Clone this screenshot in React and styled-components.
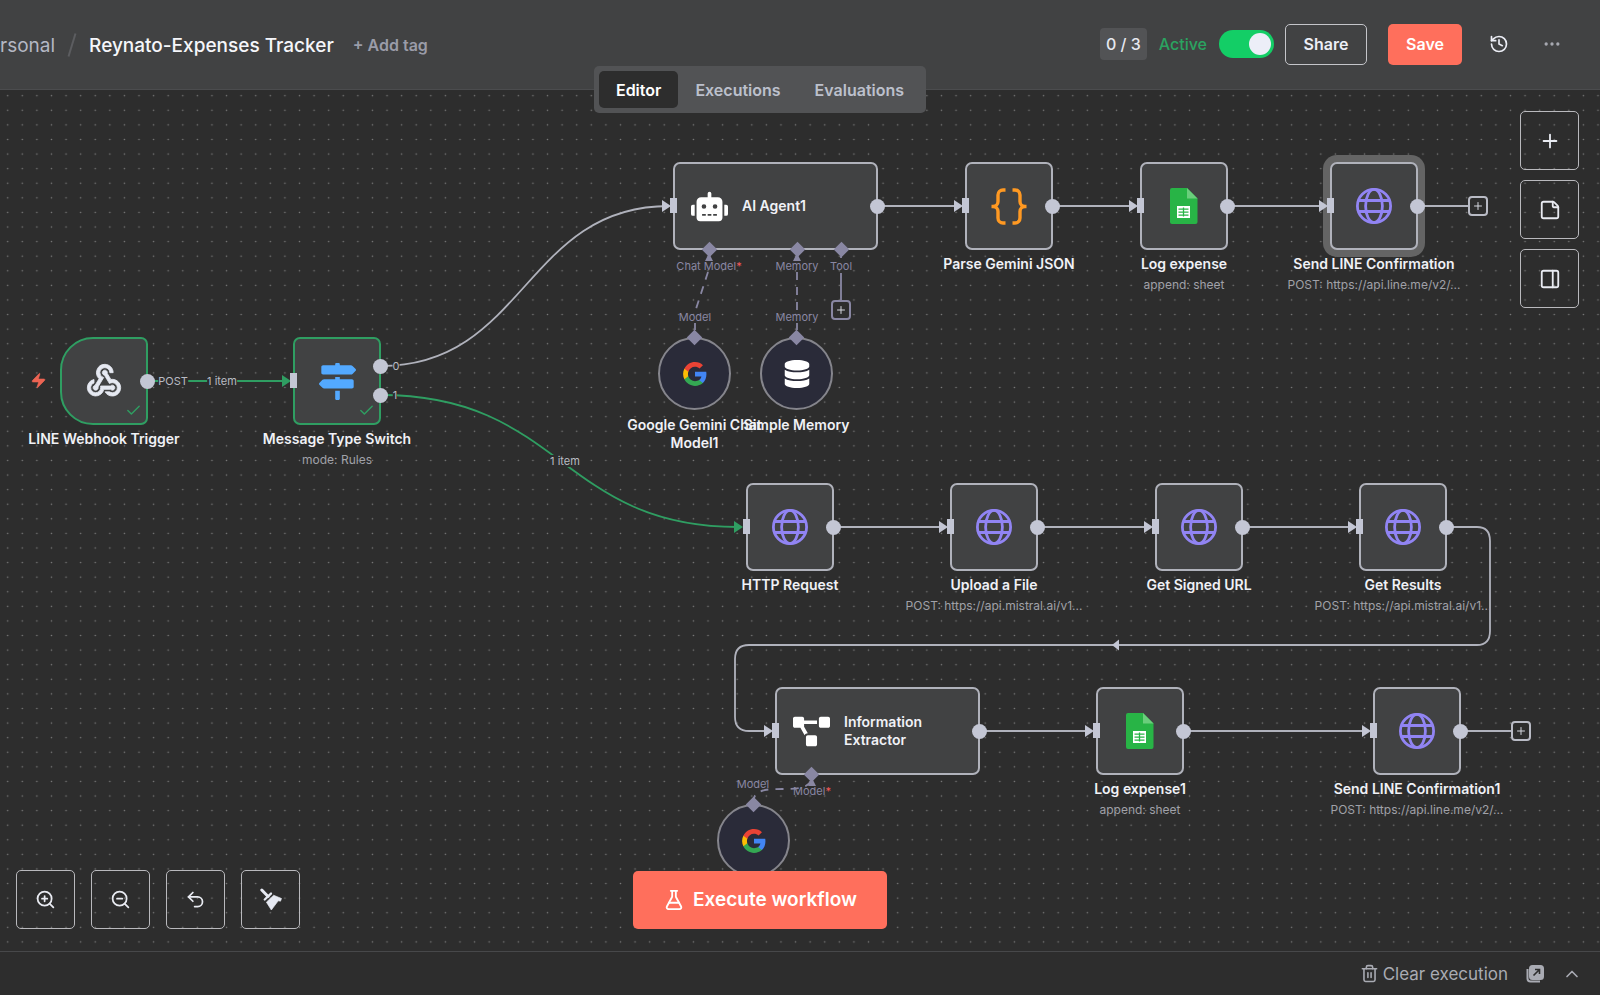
import React, { useState } from 'react'
import styled, { createGlobalStyle } from 'styled-components'
import {
    Check, ChevronUp, Ellipsis, FlaskConical, History, PanelRight, Plus,
    StickyNote, Trash2, Undo2, Zap, ZoomIn, ZoomOut
} from 'lucide-react'
import { FaDatabase, FaMapSigns, FaProjectDiagram, FaRobot } from 'react-icons/fa'
import { MdWebhook } from 'react-icons/md'

const colors = {
    canvas: '#2d2d2d',
    surface: '#414243',
    raised: '#525355',
    line: '#b0b2bc',
    handle: '#c3c6d4',
    sub: '#8987a3',
    green: '#2f9e62',
    primary: '#ff6f5c',
}

const Globe = () => (
    <svg width="36" height="36" viewBox="0 0 36 36" fill="none" stroke="#9184f3" strokeWidth="2.800">
        <circle cx="18" cy="18" r="16.600" />
        <ellipse cx="18" cy="18" rx="8.400" ry="16.600" />
        <path d="M2.200 12.500h31.600M2.200 23.500h31.600" />
    </svg>
)

const Sheet = () => (
    <svg width="28" height="36" viewBox="0 0 28 36">
        <path d="M2 0h15l10.500 10.500V34a2 2 0 0 1-2 2H2a2 2 0 0 1-2-2V2a2 2 0 0 1 2-2z" fill="#28b446" />
        <path d="M17 0l10.500 10.500H17z" fill="#6ace7c" />
        <path d="M7 18h13v12H7z" fill="#fff" />
        <path d="M8.500 21.200h10M8.500 24.200h10M8.500 27.200h10M13.500 19.500v9" stroke="#28b446" strokeWidth="1.300" />
    </svg>
)

const CodeBraces = () => (
    <svg width="36" height="37" viewBox="0 0 36 37" fill="none" stroke="#ff9922" strokeWidth="3.400">
        <path d="M14.500 2H12a5 5 0 0 0-5 5v6.500a5 5 0 0 1-5 5h-1.500 1.500a5 5 0 0 1 5 5V30a5 5 0 0 0 5 5h2.500" />
        <path d="M21.500 2H24a5 5 0 0 1 5 5v6.500a5 5 0 0 0 5 5h1.500-1.500a5 5 0 0 0-5 5V30a5 5 0 0 1-5 5h-2.500" />
    </svg>
)

const Google = () => (
    <svg width="26" height="26" viewBox="0 0 24 24">
        <path fill="#4285f4" d="M22.560 12.250c0-.78-.07-1.530-.2-2.250H12v4.260h5.920c-.26 1.370-1.040 2.530-2.210 3.310v2.770h3.570c2.080-1.920 3.280-4.740 3.280-8.090z" />
        <path fill="#34a853" d="M12 23c2.970 0 5.460-.98 7.280-2.660l-3.570-2.770c-.98.66-2.230 1.060-3.710 1.060-2.860 0-5.290-1.930-6.160-4.530H2.180v2.840C3.990 20.530 7.700 23 12 23z" />
        <path fill="#fbbc05" d="M5.840 14.090c-.22-.66-.35-1.360-.35-2.090s.13-1.430.35-2.090V7.070H2.180C1.430 8.550 1 10.220 1 12s.43 3.450 1.180 4.930l3.660-2.840z" />
        <path fill="#ea4335" d="M12 5.380c1.620 0 3.060.56 4.210 1.640l3.150-3.150C17.450 2.090 14.970 1 12 1 7.700 1 3.990 3.470 2.180 7.070l3.660 2.840c.87-2.600 3.300-4.530 6.160-4.530z" />
    </svg>
)

const Broom = () => (
    <svg width="22" height="23" viewBox="0 0 66 70" fill="#e6e9f2" stroke="#e6e9f2">
        <path d="M5 6l19 20" strokeWidth="9" strokeLinecap="round" />
        <path d="M14 35L33 17" strokeWidth="7" strokeLinecap="round" />
        <path d="M19 43L41 22L65 32L62 40L55 39L34 67Z" strokeWidth="2" strokeLinejoin="round" />
    </svg>
)

const PopOut = () => (
    <svg width="18" height="18" viewBox="0 0 18 18" fill="none" stroke="#a9abb3" strokeWidth="2">
        <path d="M1.500 4v9.500a3 3 0 0 0 3 3H14" />
        <rect x="4" y="1" width="13" height="13" rx="2.500" fill="#a9abb3" />
        <path d="M7.500 10.500L13 5M9 4.500h4.500V9" stroke="#2d2d2d" strokeWidth="1.600" />
    </svg>
)

// the material icon carries an invisible bounding path, keep it unstroked
const WebhookIcon = styled(MdWebhook)`
    color: #e6e9f2;
    stroke: #e6e9f2;

    path {
        stroke-width: 0.5px;
    }
    path[fill='none'] {
        stroke: none;
    }
`

const icons = {
    globe: <Globe />,
    sheet: <Sheet />,
    braces: <CodeBraces />,
    webhook: <WebhookIcon size={40} />,
    signs: <FaMapSigns size={37} color="#53a9ff" />,
    google: <Google />,
    database: <FaDatabase size={28} color="#fff" />,
    robot: <FaRobot size={37} color="#fff" />,
    diagram: <FaProjectDiagram size={37} color="#fff" />,
}

const nodes = [
    { x: 60, y: 247, icon: 'webhook', title: 'LINE Webhook Trigger', trigger: true, done: true, outs: [44] },
    { x: 293, y: 247, icon: 'signs', title: 'Message Type Switch', sub: 'mode: Rules', done: true, input: true, outs: [29, 58] },
    { x: 673, y: 72, icon: 'robot', name: 'AI Agent1', wide: true, input: true, outs: [44], ports: [36, 124, 168] },
    { x: 965, y: 72, icon: 'braces', title: 'Parse Gemini JSON', input: true, outs: [44] },
    { x: 1140, y: 72, icon: 'sheet', title: 'Log expense', sub: 'append: sheet', input: true, outs: [44] },
    { x: 1330, y: 72, icon: 'globe', title: 'Send LINE Confirmation', sub: 'POST: https://api.line.me/v2/...', selected: true, input: true, outs: [44] },
    { x: 746, y: 393, icon: 'globe', title: 'HTTP Request', input: true, outs: [44] },
    { x: 950, y: 393, icon: 'globe', title: 'Upload a File', sub: 'POST: https://api.mistral.ai/v1...', input: true, outs: [44] },
    { x: 1155, y: 393, icon: 'globe', title: 'Get Signed URL', input: true, outs: [44] },
    { x: 1359, y: 393, icon: 'globe', title: 'Get Results', sub: 'POST: https://api.mistral.ai/v1...', input: true, outs: [44] },
    { x: 775, y: 597, icon: 'diagram', name: 'Information Extractor', wide: true, input: true, outs: [44], ports: [36] },
    { x: 1096, y: 597, icon: 'sheet', title: 'Log expense1', sub: 'append: sheet', input: true, outs: [44] },
    { x: 1373, y: 597, icon: 'globe', title: 'Send LINE Confirmation1', sub: 'POST: https://api.line.me/v2/...', input: true, outs: [44] },
]

const subNodes = [
    { x: 658, y: 247, icon: 'google', title: 'Google Gemini Chat Model1' },
    { x: 760, y: 247, icon: 'database', title: 'Simple Memory' },
    { x: 717, y: 714, icon: 'google' },
]

const edges = [
    { d: 'M381 276C525 276 525 116 669 116', at: [671, 116] },
    { d: 'M148 291H286', at: [291, 291], ok: true },
    { d: 'M381 305C561 305 561 437 738 437', at: [743, 437], ok: true },
    { d: 'M878 116H958', at: [963, 116] },
    { d: 'M1053 116H1133', at: [1138, 116] },
    { d: 'M1228 116H1323', at: [1328, 116] },
    { d: 'M1418 116H1468' },
    { d: 'M834 437H940', at: [948, 437] },
    { d: 'M1038 437H1145', at: [1153, 437] },
    { d: 'M1243 437H1350', at: [1357, 437] },
    { d: 'M1447 437H1477Q1490 437 1490 451V541Q1490 555 1477 555H749Q735 555 735 569V627Q735 641 749 641H768', at: [773, 641] },
    { d: 'M980 641H1088', at: [1094, 641] },
    { d: 'M1184 641H1365', at: [1371, 641] },
    { d: 'M1461 641H1511' },
]

const portLabels = [
    { x: 709, y: 176, text: 'Chat Model', required: true },
    { x: 797, y: 176, text: 'Memory' },
    { x: 841, y: 176, text: 'Tool' },
    { x: 695, y: 227, text: 'Model' },
    { x: 797, y: 227, text: 'Memory' },
    { x: 753, y: 694, text: 'Model' },
    { x: 812, y: 701, text: 'Model', required: true },
]

const edgeLabels = [
    { x: 173, y: 291, text: 'POST' },
    { x: 222, y: 291, text: '1 item' },
    { x: 565, y: 371, text: '1 item' },
    { x: 396, y: 276, text: '0' },
    { x: 395, y: 305, text: '1' },
]

const plusButtons = [
    { x: 1468, y: 106, label: 'Add node after Send LINE Confirmation' },
    { x: 1511, y: 631, label: 'Add node after Send LINE Confirmation1' },
    { x: 831, y: 210, label: 'Add tool', muted: true },
]

const DotGrid = () => (
    <Layer>
        <defs>
            <pattern id="grid" width="14.590" height="14.590" patternUnits="userSpaceOnUse" x="0.400" y="-1.600">
                <circle cx="7.300" cy="7.300" r="0.800" fill="#7c7c7c" />
            </pattern>
        </defs>
        <rect width="100%" height="100%" fill="url(#grid)" />
    </Layer>
)

const Edges = () => (
    <Layer>
        {edges.map((edge) => {
            const stroke = edge.ok ? colors.green : colors.line
            return (
                <g key={edge.d}>
                    <path d={edge.d} fill="none" stroke={stroke} strokeWidth="1.800" />
                    {edge.at && (
                        <path
                            d={`M${edge.at[0]} ${edge.at[1]}l-9 -6v12z`}
                            fill={edge.ok ? colors.green : colors.handle}
                        />
                    )}
                </g>
            )
        })}
        <path d="M1112 555l7 -5.500v11z" fill={colors.handle} />
        <g fill="none" stroke={colors.sub} strokeWidth="1.800">
            <path d="M841 166V168M841 183V210M695 233V240M797 233V240" />
            <path d="M708 182L695 222M797 182V222" strokeDasharray="8 7" />
            <path d="M753 713C753 685 812 713 812 685" strokeDasharray="8 7" />
        </g>
        <g fill={colors.sub}>
            <path d="M709 163l4 8h-8zM797 163l4 8h-8zM812 688l4 8h-8z" />
        </g>
    </Layer>
)

const Node = ({ node }) => (
    <NodeWrap $x={node.x} $y={node.y}>
        <NodeBox $wide={node.wide} $done={node.done} $trigger={node.trigger}>
            {icons[node.icon]}
            {node.name && <NodeName>{node.name}</NodeName>}
            {node.done && <DoneMark size={17} strokeWidth={2} />}
        </NodeBox>
        {node.input && <Input />}
        {node.outs.map((top) => <Output key={top} $top={top} />)}
        {node.ports && node.ports.map((left) => <Port key={left} $left={left} $bottom />)}
        {node.title && (
            <Caption>
                <Title>{node.title}</Title>
                {node.sub && <Subtitle>{node.sub}</Subtitle>}
            </Caption>
        )}
    </NodeWrap>
)

const App = () => {
    const [tab, setTab] = useState('Editor')
    const [active, setActive] = useState(true)

    return (
        <Page>
            <GlobalStyle />
            <Header>
                <Breadcrumb>
                    <Project href="#">rsonal</Project>
                    <Slash />
                    <WorkflowName>Reynato-Expenses Tracker</WorkflowName>
                    <AddTag>+ Add tag</AddTag>
                </Breadcrumb>
                <Actions>
                    <Counter>0 / 3</Counter>
                    <Toggle>
                        Active
                        <input type="checkbox" checked={active} onChange={() => setActive(!active)} />
                    </Toggle>
                    <ShareButton>Share</ShareButton>
                    <SaveButton>Save</SaveButton>
                    <IconButton aria-label="History"><History size={20} /></IconButton>
                    <IconButton aria-label="More" $muted><Ellipsis size={20} /></IconButton>
                </Actions>
                <TabRow>
                    <Tabs>
                        {['Editor', 'Executions', 'Evaluations'].map((name) => (
                            <Tab key={name} $active={tab === name} onClick={() => setTab(name)}>{name}</Tab>
                        ))}
                    </Tabs>
                </TabRow>
            </Header>

            <Canvas>
                <DotGrid />
                {nodes.filter((node) => node.selected).map((node) => (
                    <Halo key={node.x} $x={node.x} $y={node.y} />
                ))}
                <Edges />
                <TriggerBolt size={17} />
                {nodes.map((node) => <Node key={node.x + '-' + node.y} node={node} />)}
                {subNodes.map((node) => (
                    <NodeWrap key={node.x} $x={node.x} $y={node.y}>
                        <SubNodeBox>{icons[node.icon]}</SubNodeBox>
                        <Port $left={36} />
                        {node.title && <Caption $narrow><Title>{node.title}</Title></Caption>}
                    </NodeWrap>
                ))}
                {portLabels.map((label) => (
                    <PortLabel key={label.x + '-' + label.y} $x={label.x} $y={label.y}>
                        {label.text}
                        {label.required && <Required>*</Required>}
                    </PortLabel>
                ))}
                {edgeLabels.map((label) => (
                    <EdgeLabel key={label.x + '-' + label.y} $x={label.x} $y={label.y}>{label.text}</EdgeLabel>
                ))}
                {plusButtons.map((button) => (
                    <PlusButton
                        key={button.label}
                        aria-label={button.label}
                        $x={button.x}
                        $y={button.y}
                        $muted={button.muted}
                    >
                        <Plus size={12} strokeWidth={2} />
                    </PlusButton>
                ))}

                <SideTools>
                    <ToolButton aria-label="Add node"><Plus size={22} /></ToolButton>
                    <ToolButton aria-label="Add sticky note"><StickyNote size={22} /></ToolButton>
                    <ToolButton aria-label="Toggle panel"><PanelRight size={22} /></ToolButton>
                </SideTools>

                <BottomTools>
                    <ZoomTools>
                        <ToolButton aria-label="Zoom in"><ZoomIn size={21} strokeWidth={2} /></ToolButton>
                        <ToolButton aria-label="Zoom out"><ZoomOut size={21} strokeWidth={2} /></ToolButton>
                        <ToolButton aria-label="Reset zoom"><Undo2 size={21} strokeWidth={2} /></ToolButton>
                        <ToolButton aria-label="Tidy up"><Broom /></ToolButton>
                    </ZoomTools>
                    <ExecuteButton>
                        <FlaskConical size={22} strokeWidth={2} />
                        Execute workflow
                    </ExecuteButton>
                </BottomTools>
            </Canvas>

            <Footer>
                <ClearButton><Trash2 size={19} />Clear execution</ClearButton>
                <FooterButton aria-label="Pop out logs"><PopOut /></FooterButton>
                <FooterButton aria-label="Open logs"><ChevronUp size={20} /></FooterButton>
            </Footer>
        </Page>
    )
}

const GlobalStyle = createGlobalStyle`
    * {
        box-sizing: border-box;
    }
    body {
        margin: 0;
        background: ${colors.canvas};
        font-family: Inter, sans-serif;
    }
    button {
        font-family: inherit;
        border: none;
        padding: 0;
        background: transparent;
        cursor: pointer;
    }
    svg {
        flex-shrink: 0;
    }
`

const Page = styled.div`
    display: flex;
    flex-direction: column;
    height: 100vh;
    overflow: hidden;
`

const Header = styled.header`
    position: relative;
    z-index: 2;
    display: flex;
    align-items: center;
    justify-content: space-between;
    height: 90px;
    padding-right: 38px;
    flex-shrink: 0;
    background: ${colors.surface};
    border-bottom: 1px solid #4b4c4e;
`

const Breadcrumb = styled.div`
    display: flex;
    align-items: center;
    padding-top: 1px;
    white-space: nowrap;
`

const Project = styled.a`
    color: #b4b8c4;
    font-size: 19px;
    text-decoration: none;
`

const Slash = styled.span`
    width: 2px;
    height: 24px;
    margin: 0 16px;
    background: #5c5d60;
    transform: rotate(17deg);
`

const WorkflowName = styled.h1`
    margin: 0;
    color: #f5f6fa;
    font-size: 19px;
    font-weight: 500;
`

const AddTag = styled.button`
    margin-left: 19px;
    color: #9a9ca8;
    font-size: 16px;
    font-weight: 600;
`

const Actions = styled.div`
    display: flex;
    align-items: center;
    padding-bottom: 1px;
`

const Counter = styled.span`
    padding: 0 6px;
    border-radius: 4px;
    background: ${colors.raised};
    color: #e6e8f0;
    font-size: 16px;
    font-weight: 500;
    line-height: 32px;
`

const Toggle = styled.label`
    display: flex;
    align-items: center;
    gap: 12px;
    margin: 0 11px 0 12px;
    color: #2ba360;
    font-size: 16px;
    font-weight: 500;

    input {
        appearance: none;
        width: 55px;
        height: 28px;
        margin: 0;
        padding: 3px;
        border-radius: 14px;
        background: #77787c;
        cursor: pointer;
    }
    input::before {
        content: '';
        display: block;
        width: 22px;
        height: 22px;
        border-radius: 50%;
        background: #eceef8;
    }
    input:checked {
        background: #13ce66;
    }
    input:checked::before {
        margin-left: auto;
    }
`

const ShareButton = styled.button`
    width: 82px;
    height: 41px;
    border: 1px solid #c4c5ca;
    border-radius: 5px;
    color: #eceef6;
    font-size: 16px;
    font-weight: 600;
`

const SaveButton = styled(ShareButton)`
    width: 74px;
    margin: 0 27px 0 21px;
    border: none;
    background: ${colors.primary};
    color: #fff;
`

const IconButton = styled.button`
    display: flex;
    color: ${props => props.$muted ? '#a6a8b0' : '#eceef6'};

    & + & {
        margin-left: 33px;
    }
`

const TabRow = styled.div`
    position: absolute;
    top: 66px;
    left: 0;
    right: 80px;
    display: flex;
    justify-content: center;
    pointer-events: none;
`

const Tabs = styled.nav`
    display: flex;
    padding: 5px;
    border-radius: 5px;
    background: ${colors.raised};
    pointer-events: auto;
`

const Tab = styled.button`
    height: 37px;
    padding: 0 17px;
    border-radius: 5px;
    background: ${props => props.$active ? colors.canvas : 'transparent'};
    color: ${props => props.$active ? '#fff' : '#bcc0cc'};
    font-size: 16px;
    font-weight: 600;
`

const Canvas = styled.main`
    position: relative;
    flex: 1;
    min-height: 0;
    overflow: hidden;
    background: ${colors.canvas};
`

const Layer = styled.svg`
    position: absolute;
    width: 100%;
    height: 100%;
`

const TriggerBolt = styled(Zap)`
    position: absolute;
    left: 30px;
    top: 282px;
    color: #ec6453;
    fill: currentColor;
    stroke-width: 1;
`

const NodeWrap = styled.div`
    position: absolute;
    left: ${props => props.$x}px;
    top: ${props => props.$y}px;
`

const Halo = styled(NodeWrap)`
    width: 88px;
    height: 88px;
    border-radius: 7px;
    background: #646464;
    box-shadow: 0 0 0 7px #646464;
`

const NodeBox = styled.div`
    position: relative;
    display: flex;
    align-items: center;
    justify-content: ${props => props.$wide ? 'flex-start' : 'center'};
    gap: 14px;
    width: ${props => props.$wide ? 205 : 88}px;
    height: 88px;
    padding: ${props => props.$wide ? '0 16px' : 0};
    border: 2px solid ${props => props.$done ? colors.green : '#b0b2bb'};
    border-radius: ${props => props.$trigger ? '33px 7px 7px 33px' : '7px'};
    background: ${colors.surface};
`

const NodeName = styled.span`
    color: #f0f1f6;
    font-size: 14px;
    font-weight: 600;
    line-height: 18px;
`

const DoneMark = styled(Check)`
    position: absolute;
    right: 4px;
    bottom: 4px;
    color: ${colors.green};
`

const SubNodeBox = styled.div`
    display: flex;
    align-items: center;
    justify-content: center;
    width: 73px;
    height: 73px;
    border: 2px solid #85858c;
    border-radius: 50%;
    background: #2a2b39;
`

const Input = styled.span`
    position: absolute;
    left: -3px;
    top: 36px;
    width: 7px;
    height: 15px;
    background: ${colors.handle};
`

const Output = styled.span`
    position: absolute;
    right: -7px;
    top: ${props => props.$top - 7}px;
    width: 15px;
    height: 15px;
    border-radius: 50%;
    background: ${colors.handle};
`

const Port = styled.span`
    position: absolute;
    left: ${props => props.$left - 5}px;
    top: ${props => props.$bottom ? 82 : -5}px;
    width: 11px;
    height: 11px;
    background: ${colors.sub};
    transform: rotate(45deg);
`

const Caption = styled.div`
    position: absolute;
    top: 100%;
    left: 50%;
    display: flex;
    flex-direction: column;
    gap: 4px;
    width: ${props => props.$narrow ? 146 : 200}px;
    padding-top: ${props => props.$narrow ? 6 : 5}px;
    text-align: center;
    transform: translateX(-50%);
`

const Title = styled.span`
    color: #f0f1f6;
    font-size: 14px;
    font-weight: 600;
    line-height: 18px;
`

const Subtitle = styled.span`
    color: #a0a1a8;
    font-size: 12px;
    line-height: 16px;
    white-space: nowrap;
`

const PortLabel = styled.span`
    position: absolute;
    left: ${props => props.$x}px;
    top: ${props => props.$y}px;
    color: ${colors.sub};
    font-size: 11px;
    line-height: 12px;
    white-space: nowrap;
    transform: translate(-50%, -50%);
`

const Required = styled.span`
    color: #f45959;
`

const EdgeLabel = styled(PortLabel)`
    background: ${colors.canvas};
    color: #b9bbc3;
`

const PlusButton = styled.button`
    position: absolute;
    left: ${props => props.$x}px;
    top: ${props => props.$y}px;
    display: flex;
    align-items: center;
    justify-content: center;
    width: 20px;
    height: 20px;
    border: 2px solid ${props => props.$muted ? colors.sub : '#b9bbc5'};
    border-radius: 4px;
    background: ${colors.canvas};
    color: #d6d8e0;
`

const SideTools = styled.div`
    position: absolute;
    top: 21px;
    right: 21px;
    display: flex;
    flex-direction: column;
    gap: 10px;
`

const BottomTools = styled.div`
    position: absolute;
    left: 0;
    right: 0;
    bottom: 22px;
    display: grid;
    grid-template-columns: 1fr auto 1fr;
    align-items: center;
    padding: 0 96px 0 16px;
`

const ZoomTools = styled.div`
    display: flex;
    gap: 16px;
`

const ToolButton = styled.button`
    display: flex;
    align-items: center;
    justify-content: center;
    width: 59px;
    height: 59px;
    border: 1px solid #b9b9bd;
    border-radius: 5px;
    color: #e9ebf2;
`

const ExecuteButton = styled.button`
    display: flex;
    align-items: center;
    gap: 8px;
    height: 58px;
    padding: 0 30px;
    border-radius: 5px;
    background: ${colors.primary};
    color: #fff;
    font-size: 19px;
    font-weight: 600;
`

const Footer = styled.footer`
    display: flex;
    align-items: center;
    justify-content: flex-end;
    gap: 18px;
    height: 44px;
    flex-shrink: 0;
    padding: 0 18px;
    border-top: 1px solid #47484a;
    background: ${colors.canvas};
`

const FooterButton = styled.button`
    display: flex;
    align-items: center;
    color: #a9abb3;
`

const ClearButton = styled(FooterButton)`
    gap: 4px;
    font-size: 17px;
    font-weight: 400;
`

export default App
